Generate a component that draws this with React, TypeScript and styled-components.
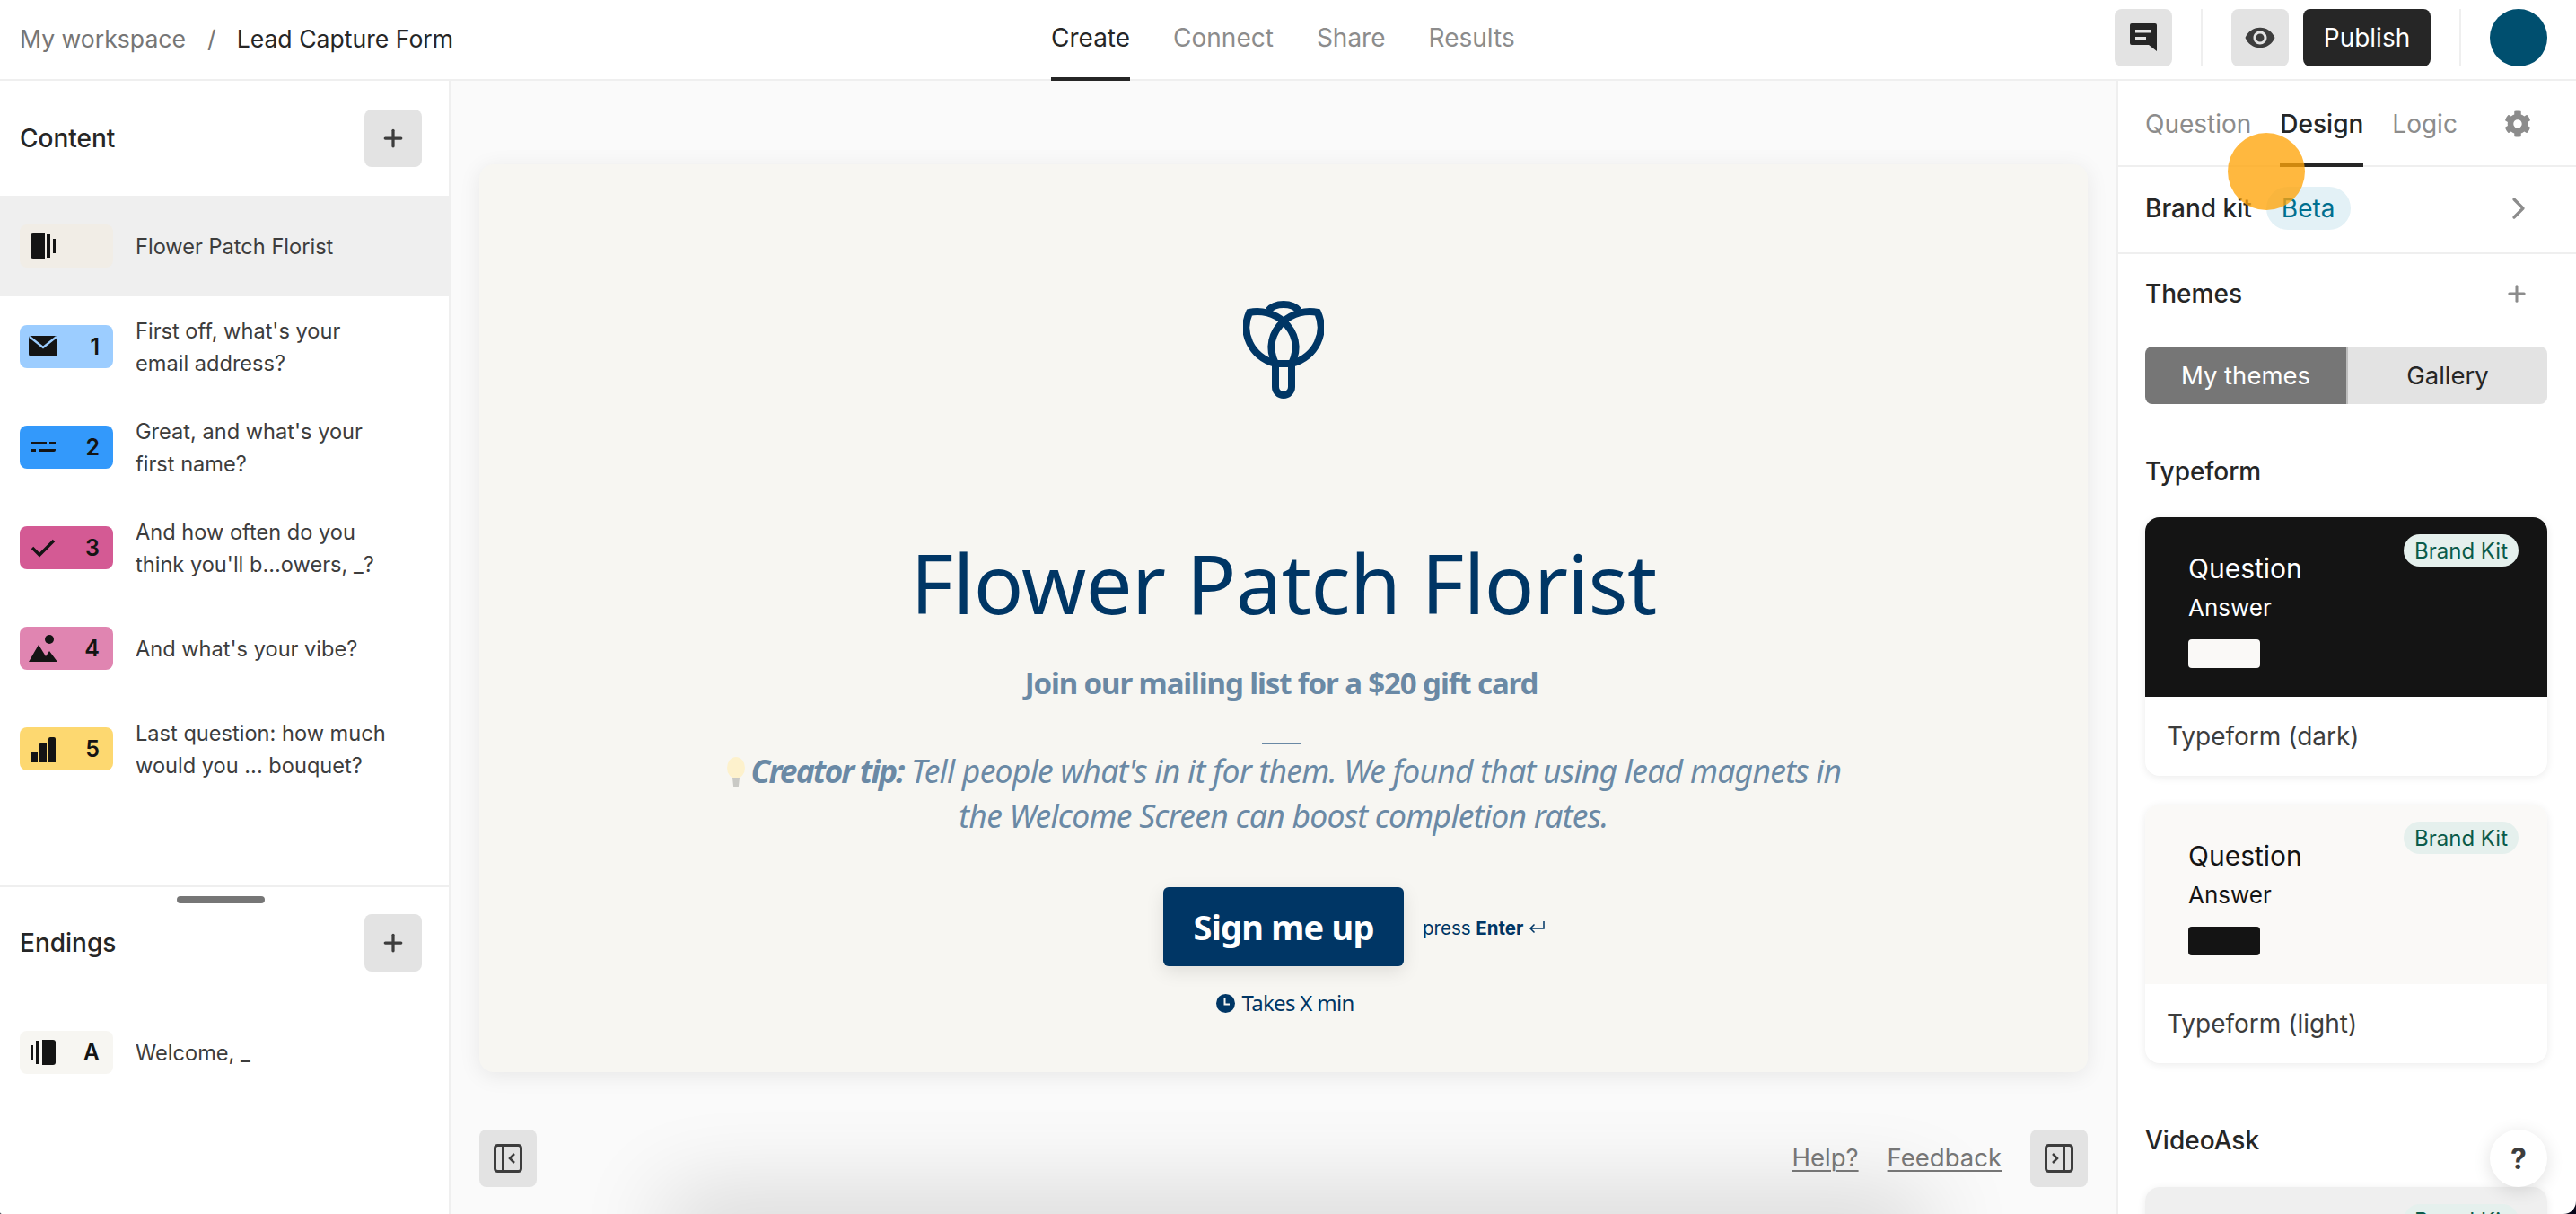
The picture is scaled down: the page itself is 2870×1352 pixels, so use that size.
import React from 'react';
import styled, { createGlobalStyle } from 'styled-components';
import { ChevronRight, Plus } from 'lucide-react';
import { FaCog } from 'react-icons/fa';
import { MdVisibility } from 'react-icons/md';

const GlobalStyle = createGlobalStyle`
  html, body {
    margin: 0;
    padding: 0;
    background: #07071a;
  }
  * {
    box-sizing: border-box;
  }
`;

const Page = styled.div`
  position: relative;
  width: 2870px;
  height: 1352px;
  display: flex;
  flex-direction: column;
  overflow: hidden;
  background: #fff;
  border-radius: 0 0 14px 2px;
  font-family: Inter, 'Liberation Sans', sans-serif;
  color: #262626;
`;

const Header = styled.header`
  flex: none;
  height: 90px;
  display: flex;
  align-items: flex-start;
  border-bottom: 2px solid #efefef;
`;

const Breadcrumb = styled.div`
  width: 1171px;
  height: 88px;
  padding: 0 0 2px 22px;
  display: flex;
  align-items: center;
  font-size: 26.6px;
`;

const Crumb = styled.span<{ $muted?: boolean }>`
  color: ${({ $muted }) => ($muted ? '#767676' : '#262626')};
`;

const Slash = styled.span`
  margin: 0 23px 0 24px;
  color: #767676;
`;

const Nav = styled.nav`
  display: flex;
  gap: 48px;
  height: 90px;
`;

const NavItem = styled.div<{ $active?: boolean }>`
  height: 90px;
  padding-bottom: 2px;
  display: flex;
  align-items: center;
  font-size: 28px;
  color: ${({ $active }) => ($active ? '#262626' : '#8c8c8c')};
  border-bottom: 4px solid ${({ $active }) => ($active ? '#262626' : 'transparent')};
`;

const HeaderActions = styled.div`
  margin-left: auto;
  padding: 10px 32px 0 0;
  display: flex;
  align-items: center;
`;

const IconButton = styled.button`
  width: 64px;
  height: 64px;
  padding: 0;
  border: none;
  border-radius: 8px;
  background: #e3e3e3;
  color: #3d3d3d;
  display: flex;
  align-items: center;
  justify-content: center;
  flex: none;
`;

const PublishButton = styled.button`
  width: 142px;
  height: 64px;
  margin-left: 16px;
  border: none;
  border-radius: 8px;
  background: #262626;
  color: #fff;
  font: 400 28px Inter, sans-serif;
`;

const HeaderDivider = styled.div`
  width: 2px;
  height: 64px;
  margin: 0 32px;
  background: #efefef;
`;

const Avatar = styled.div`
  width: 64px;
  height: 64px;
  border-radius: 50%;
  background: #004f6f;
`;

const Body = styled.div`
  flex: 1;
  min-height: 0;
  display: flex;
`;

const LeftPanel = styled.aside`
  flex: none;
  width: 502px;
  display: flex;
  flex-direction: column;
  border-right: 2px solid #efefef;
`;

const ContentSection = styled.section`
  flex: 1;
  border-bottom: 2px solid #efefef;
`;

const PanelHeader = styled.div`
  height: 128px;
  padding: 0 30px 0 22px;
  display: flex;
  align-items: center;
  justify-content: space-between;
  font-size: 28px;
  font-weight: 500;
`;

const EndingsSection = styled.section`
  flex: none;
  height: 364px;
  display: flex;
  flex-direction: column;
`;

const Handle = styled.div`
  width: 98px;
  height: 8px;
  margin: 10px 0 12px 197px;
  border-radius: 4px;
  background: #767676;
`;

const EndingsHeader = styled(PanelHeader)`
  flex: none;
  height: 64px;
  margin-bottom: 34px;
`;

const Row = styled.div<{ $active?: boolean }>`
  flex: none;
  height: 112px;
  padding-left: 22px;
  display: flex;
  align-items: center;
  gap: 25px;
  background: ${({ $active }) => ($active ? '#efefef' : 'transparent')};
`;

const Badge = styled.div<{ $bg: string }>`
  flex: none;
  width: 104px;
  height: 48px;
  padding: 0 15px 0 10px;
  display: flex;
  align-items: center;
  justify-content: space-between;
  border-radius: 8px;
  background: ${({ $bg }) => $bg};
  font-size: 25px;
  font-weight: 600;
  color: #141414;
`;

const BadgeIcon = styled.svg`
  display: block;
  width: 32px;
  height: 32px;
  fill: #141414;
`;

const RowText = styled.div`
  padding-top: 2px;
  font-size: 23.6px;
  line-height: 36px;
  color: #3d3d3d;
`;

const Main = styled.main`
  position: relative;
  flex: 1;
  min-width: 0;
  padding: 93px 32px 0;
  background: #fafafa;
`;

const WelcomeCard = styled.div`
  height: 1011px;
  padding-top: 152px;
  display: flex;
  flex-direction: column;
  align-items: center;
  border-radius: 16px;
  background: #f7f6f2;
  box-shadow: 0 4px 24px rgba(0, 0, 0, 0.08);
  font-family: 'Noto Sans', sans-serif;
  color: #003665;
`;

const Logo = styled.svg`
  display: block;
  width: 90px;
  height: 110px;
  fill: none;
  stroke: #003665;
  stroke-width: 8;
`;

const Title = styled.h1`
  margin: 145px 0 0;
  font-size: 92px;
  line-height: 118px;
  font-weight: 400;
  letter-spacing: -0.6px;
`;

const Subtitle = styled.div`
  margin: 28px 5px 0 0;
  font-size: 33px;
  line-height: 50px;
  font-weight: 700;
  letter-spacing: -1.1px;
  color: #6a89a5;
`;

const Dash = styled.div`
  width: 44px;
  height: 2px;
  margin: 41px 5px 4px 0;
  background: #6a89a5;
`;

const Tip = styled.div`
  font-size: 35.5px;
  line-height: 50px;
  font-style: italic;
  text-align: center;
  letter-spacing: -0.76px;
  color: #6a89a5;

  strong {
    letter-spacing: -1.9px;
  }
`;

const Bulb = styled.svg`
  width: 22px;
  height: 34px;
  margin-right: 6px;
  vertical-align: -5px;
`;

const CallToAction = styled.div`
  width: 100%;
  margin-top: 55px;
  display: grid;
  grid-template-columns: 1fr auto 1fr;
  align-items: center;
`;

const SubmitButton = styled.button`
  grid-column: 2;
  width: 268px;
  height: 88px;
  border: none;
  border-radius: 6px;
  background: #003665;
  color: #fff;
  font: 700 38px 'Noto Sans', sans-serif;
  letter-spacing: -0.8px;
  box-shadow: 0 6px 20px rgba(0, 0, 0, 0.1);
`;

const PressHint = styled.div`
  margin: 2px 0 0 21px;
  display: flex;
  align-items: center;
  font-family: Inter, sans-serif;
  font-size: 20.5px;
  gap: 6px;

  strong {
    font-weight: 700;
  }
`;

const TimeToComplete = styled.div`
  margin: 26px 0 0 4px;
  display: flex;
  align-items: center;
  gap: 7px;
  font-size: 24px;
  line-height: 30px;
  letter-spacing: -0.7px;
`;

const MainFooter = styled.div`
  margin-top: 64px;
  display: flex;
  align-items: center;
  position: relative;
  z-index: 1;
`;

const FooterLink = styled.span`
  font-size: 27.5px;
  color: #767676;
  text-decoration: underline;
  text-underline-offset: 4px;
  text-decoration-thickness: 2px;
`;

const FooterLinks = styled.div`
  margin: 0 32px 2px auto;
  display: flex;
  gap: 32px;
`;

const BottomGlow = styled.div`
  position: absolute;
  left: 260px;
  right: 230px;
  top: 1262px;
  height: 40px;
  background: #d4d4d4;
  box-shadow: 0 0 100px 20px rgba(0, 0, 0, 0.16);
`;

const RightPanel = styled.aside`
  flex: none;
  width: 512px;
  border-left: 2px solid #efefef;
  overflow: hidden;
`;

const TabsRow = styled.div`
  height: 96px;
  padding: 0 50px 0 30px;
  display: flex;
  align-items: flex-start;
  gap: 32px;
  border-bottom: 2px solid #efefef;
`;

const Tab = styled.div<{ $active?: boolean }>`
  height: 96px;
  padding-top: 28px;
  font-size: 28px;
  line-height: 40px;
  color: ${({ $active }) => ($active ? '#262626' : '#8c8c8c')};
  font-weight: ${({ $active }) => ($active ? 500 : 400)};
  border-bottom: 4px solid ${({ $active }) => ($active ? '#262626' : 'transparent')};
`;

const GearSlot = styled.div`
  margin-left: auto;
  padding-top: 33px;
  color: #8c8c8c;
`;

const BrandKitRow = styled.div`
  height: 97px;
  padding: 0 44px 4px 30px;
  display: flex;
  align-items: center;
  font-size: 28px;
  font-weight: 500;
  border-bottom: 2px solid #efefef;
  color: #8c8c8c;
`;

const BrandKitLabel = styled.span`
  color: #262626;
`;

const BetaPill = styled.span`
  height: 48px;
  margin-left: 16px;
  padding: 0 17px;
  display: flex;
  align-items: center;
  border-radius: 24px;
  background: #e3f1f6;
  color: #006f8f;
  font-weight: 400;
`;

const ThemesHeader = styled.div`
  height: 88px;
  padding: 0 52px 0 30px;
  display: flex;
  align-items: center;
  justify-content: space-between;
  font-size: 28px;
  font-weight: 500;
  color: #8c8c8c;
`;

const SectionLabel = styled.span`
  color: #262626;
`;

const Segmented = styled.div`
  width: 448px;
  height: 64px;
  margin: 15px 0 0 30px;
  display: flex;
  border-radius: 8px;
  overflow: hidden;
`;

const Segment = styled.div<{ $active?: boolean }>`
  flex: ${({ $active }) => ($active ? '0 0 224px' : '1')};
  display: flex;
  align-items: center;
  justify-content: center;
  font-size: 27.5px;
  background: ${({ $active }) => ($active ? '#767676' : '#e3e3e3')};
  color: ${({ $active }) => ($active ? '#fff' : '#262626')};
  border-left: ${({ $active }) => ($active ? 'none' : '2px solid #bdbdbd')};
`;

const GroupTitle = styled.div<{ $top: number }>`
  margin: ${({ $top }) => $top}px 0 0 30px;
  height: 40px;
  display: flex;
  align-items: center;
  font-size: 28px;
  font-weight: 500;
`;

const ThemeCard = styled.div<{ $top: number }>`
  width: 448px;
  margin: ${({ $top }) => $top}px 0 0 30px;
  border-radius: 16px;
  overflow: hidden;
  background: #fff;
  box-shadow: 0 2px 10px rgba(0, 0, 0, 0.08);
`;

const ThemePreview = styled.div<{ $bg: string; $fg: string }>`
  position: relative;
  height: 200px;
  padding: 37px 0 0 48px;
  background: ${({ $bg }) => $bg};
  color: ${({ $fg }) => $fg};
`;

const PreviewQuestion = styled.div`
  font-size: 30px;
  line-height: 40px;
`;

const PreviewAnswer = styled.div`
  margin-top: 4px;
  font-size: 26px;
  line-height: 40px;
`;

const PreviewButton = styled.div<{ $bg: string }>`
  width: 80px;
  height: 32px;
  margin-top: 15px;
  border-radius: 4px;
  background: ${({ $bg }) => $bg};
`;

const KitPill = styled.span`
  position: absolute;
  top: 19px;
  right: 32px;
  width: 128px;
  height: 36px;
  display: flex;
  align-items: center;
  justify-content: center;
  border-radius: 18px;
  background: #e5f0ed;
  color: #0a5b4a;
  font-size: 24px;
`;

const ThemeName = styled.div`
  height: 88px;
  padding-left: 24px;
  display: flex;
  align-items: center;
  font-size: 28px;
  color: #3d3d3d;
`;

const CursorDot = styled.div`
  position: absolute;
  left: 2482px;
  top: 148px;
  width: 86px;
  height: 86px;
  border-radius: 50%;
  background: rgba(255, 164, 9, 0.78);
  pointer-events: none;
`;

const HelpBubble = styled.div`
  position: absolute;
  left: 2774px;
  top: 1258px;
  width: 64px;
  height: 64px;
  display: flex;
  align-items: center;
  justify-content: center;
  border-radius: 50%;
  background: #fff;
  box-shadow: 0 4px 20px rgba(0, 0, 0, 0.12);
  font-size: 32px;
  font-weight: 700;
  color: #3d3d3d;
`;

const StatementIcon = () => (
  <BadgeIcon viewBox="0 0 32 32">
    <path d="M5 4h13v28H5a3 3 0 0 1-3-3V7a3 3 0 0 1 3-3z" transform="translate(0 -2)" />
    <rect x="20" y="3" width="4" height="26" />
    <rect x="27" y="8" width="3" height="16" />
  </BadgeIcon>
);

const EndingIcon = () => (
  <BadgeIcon viewBox="0 0 32 32">
    <rect x="2" y="8" width="3" height="16" />
    <rect x="8" y="3" width="4" height="26" />
    <path d="M15 2h12a3 3 0 0 1 3 3v22a3 3 0 0 1-3 3H15z" />
  </BadgeIcon>
);

const MailIcon = ({ bg }: { bg: string }) => (
  <BadgeIcon viewBox="0 0 32 32">
    <rect x="0" y="4" width="32" height="23" rx="3" />
    <path d="M1 5l15 12L31 5" fill="none" stroke={bg} strokeWidth="2.4" />
  </BadgeIcon>
);

const ShortTextIcon = () => (
  <BadgeIcon viewBox="0 0 32 32">
    <rect x="2" y="10" width="18" height="3" />
    <rect x="23" y="10" width="7" height="3" />
    <rect x="2" y="18" width="6" height="3" />
    <path d="M12 18h18v1a2 2 0 0 1-2 2H12z" />
  </BadgeIcon>
);

const CheckIcon = () => (
  <BadgeIcon viewBox="0 0 32 32">
    <path d="M4 16l8 8L28 8" fill="none" stroke="#141414" strokeWidth="3.4" />
  </BadgeIcon>
);

const PictureIcon = () => (
  <BadgeIcon viewBox="0 0 32 32">
    <circle cx="23" cy="6" r="5" />
    <path d="M0 31L11 12l8 13 4-6 9 12z" />
  </BadgeIcon>
);

const BarsIcon = () => (
  <BadgeIcon viewBox="0 0 32 32">
    <path d="M2 21a2 2 0 0 1 2-2h6v12H2z" />
    <path d="M12 11a2 2 0 0 1 2-2h6v22h-8z" />
    <path d="M22 5a2 2 0 0 1 2-2h4a2 2 0 0 1 2 2v26h-8z" />
  </BadgeIcon>
);

const ChatIcon = () => (
  <svg width="30" height="32" viewBox="0 0 30 32">
    <path d="M2 0h26a2 2 0 0 1 2 2v29l-9-7H2a2 2 0 0 1-2-2V2a2 2 0 0 1 2-2z" fill="#262626" />
    <rect x="6" y="7" width="18" height="3.5" fill="#e3e3e3" />
    <rect x="6" y="15" width="12" height="3.5" fill="#e3e3e3" />
  </svg>
);

const PanelToggle = ({ flip }: { flip?: boolean }) => (
  <svg width="32" height="32" viewBox="0 0 32 32" fill="none" stroke="#3d3d3d" strokeWidth="3">
    <g transform={flip ? 'matrix(-1 0 0 1 32 0)' : undefined}>
      <rect x="1.5" y="1.5" width="29" height="29" rx="3" />
      <path d="M10.5 2v28" />
      <path d="M23 11l-5 5 5 5" strokeWidth="2.5" />
    </g>
  </svg>
);

const ClockIcon = () => (
  <svg width="21" height="21" viewBox="0 0 21 21">
    <circle cx="10.5" cy="10.5" r="10.5" fill="#003665" />
    <path d="M9.5 5v6.5H15" fill="none" stroke="#f7f6f2" strokeWidth="2" />
  </svg>
);

const ReturnIcon = () => (
  <svg width="18" height="14" viewBox="0 0 18 14" fill="none" stroke="#003665" strokeWidth="1.5">
    <path d="M17 0v8H2M6.5 3.5L2 8l4.5 4.5" />
  </svg>
);

const questions = [
  { id: 1, bg: '#9ccdff', text: ["First off, what's your", 'email address?'] },
  { id: 2, bg: '#3399fb', text: ["Great, and what's your", 'first name?'] },
  { id: 3, bg: '#d45a94', text: ['And how often do you', "think you'll b...owers, _?"] },
  { id: 4, bg: '#e085b1', text: ["And what's your vibe?"] },
  { id: 5, bg: '#fdd870', text: ['Last question: how much', 'would you ... bouquet?'] },
];

const questionIcon = (id: number, bg: string) => {
  switch (id) {
    case 1:
      return <MailIcon bg={bg} />;
    case 2:
      return <ShortTextIcon />;
    case 3:
      return <CheckIcon />;
    case 4:
      return <PictureIcon />;
    default:
      return <BarsIcon />;
  }
};

export default function App() {
  return (
    <Page>
      <GlobalStyle />
      <Header>
        <Breadcrumb>
          <Crumb $muted>My workspace</Crumb>
          <Slash>/</Slash>
          <Crumb>Lead Capture Form</Crumb>
        </Breadcrumb>
        <Nav>
          <NavItem $active>Create</NavItem>
          <NavItem>Connect</NavItem>
          <NavItem>Share</NavItem>
          <NavItem>Results</NavItem>
        </Nav>
        <HeaderActions>
          <IconButton>
            <ChatIcon />
          </IconButton>
          <HeaderDivider />
          <IconButton>
            <MdVisibility size={36} />
          </IconButton>
          <PublishButton>Publish</PublishButton>
          <HeaderDivider />
          <Avatar />
        </HeaderActions>
      </Header>
      <Body>
        <LeftPanel>
          <ContentSection>
            <PanelHeader>
              Content
              <IconButton>
                <Plus size={30} strokeWidth={2.6} />
              </IconButton>
            </PanelHeader>
            <Row $active>
              <Badge $bg="#f1ede6">
                <StatementIcon />
              </Badge>
              <RowText>Flower Patch Florist</RowText>
            </Row>
            {questions.map((q) => (
              <Row key={q.id}>
                <Badge $bg={q.bg}>
                  {questionIcon(q.id, q.bg)}
                  {q.id}
                </Badge>
                <RowText>
                  {q.text.map((line) => (
                    <div key={line}>{line}</div>
                  ))}
                </RowText>
              </Row>
            ))}
          </ContentSection>
          <EndingsSection>
            <Handle />
            <EndingsHeader>
              Endings
              <IconButton>
                <Plus size={30} strokeWidth={2.6} />
              </IconButton>
            </EndingsHeader>
            <Row>
              <Badge $bg="#f7f6f2">
                <EndingIcon />A
              </Badge>
              <RowText>Welcome, _</RowText>
            </Row>
          </EndingsSection>
        </LeftPanel>
        <Main>
          <WelcomeCard>
            <Logo viewBox="0 0 90 110">
              <path d="M36 70v26a9 9 0 0 0 18 0V70" />
              <path d="M36 70h18" />
              <path d="M45 23C35 14 20 10 7 13C-3 35 8 62 36 70" />
              <path d="M45 23C55 14 70 10 83 13C93 35 82 62 54 70" />
              <path d="M28 11C32 6 38 4 45 4s13 2 17 7" />
              <path d="M36 70C27 52 32 35 45 23" />
              <path d="M54 70C63 52 58 35 45 23" />
            </Logo>
            <Title>Flower Patch Florist</Title>
            <Subtitle>Join our mailing list for a $20 gift card</Subtitle>
            <Dash />
            <Tip>
              <Bulb viewBox="0 0 22 34">
                <ellipse cx="11" cy="12" rx="10" ry="12" fill="#fdf1cc" />
                <path d="M7 23h8l-1 9a3 3 0 0 1-6 0z" fill="#c9c9c5" />
              </Bulb>
              <strong>Creator tip:</strong> Tell people what's in it for them. We found that using lead magnets in
              <br />
              the Welcome Screen can boost completion rates.
            </Tip>
            <CallToAction>
              <SubmitButton>Sign me up</SubmitButton>
              <PressHint>
                <span>
                  press <strong>Enter</strong>
                </span>
                <ReturnIcon />
              </PressHint>
            </CallToAction>
            <TimeToComplete>
              <ClockIcon />
              Takes X min
            </TimeToComplete>
          </WelcomeCard>
          <MainFooter>
            <IconButton>
              <PanelToggle />
            </IconButton>
            <FooterLinks>
              <FooterLink>Help?</FooterLink>
              <FooterLink>Feedback</FooterLink>
            </FooterLinks>
            <IconButton>
              <PanelToggle flip />
            </IconButton>
          </MainFooter>
          <BottomGlow />
        </Main>
        <RightPanel>
          <TabsRow>
            <Tab>Question</Tab>
            <Tab $active>Design</Tab>
            <Tab>Logic</Tab>
            <GearSlot>
              <FaCog size={30} />
            </GearSlot>
          </TabsRow>
          <BrandKitRow>
            <BrandKitLabel>Brand kit</BrandKitLabel>
            <BetaPill>Beta</BetaPill>
            <ChevronRight size={40} strokeWidth={2} style={{ marginLeft: 'auto' }} />
          </BrandKitRow>
          <ThemesHeader>
            <SectionLabel>Themes</SectionLabel>
            <Plus size={28} strokeWidth={2.6} />
          </ThemesHeader>
          <Segmented>
            <Segment $active>My themes</Segment>
            <Segment>Gallery</Segment>
          </Segmented>
          <GroupTitle $top={55}>Typeform</GroupTitle>
          <ThemeCard $top={31}>
            <ThemePreview $bg="#141414" $fg="#fff">
              <PreviewQuestion>Question</PreviewQuestion>
              <PreviewAnswer>Answer</PreviewAnswer>
              <PreviewButton $bg="#faf9f7" />
              <KitPill>Brand Kit</KitPill>
            </ThemePreview>
            <ThemeName>Typeform (dark)</ThemeName>
          </ThemeCard>
          <ThemeCard $top={32}>
            <ThemePreview $bg="#faf9f7" $fg="#141414">
              <PreviewQuestion>Question</PreviewQuestion>
              <PreviewAnswer>Answer</PreviewAnswer>
              <PreviewButton $bg="#141414" />
              <KitPill>Brand Kit</KitPill>
            </ThemePreview>
            <ThemeName>Typeform (light)</ThemeName>
          </ThemeCard>
          <GroupTitle $top={66}>VideoAsk</GroupTitle>
          <ThemeCard $top={32}>
            <ThemePreview $bg="#efefef" $fg="#141414">
              <KitPill>Brand Kit</KitPill>
            </ThemePreview>
          </ThemeCard>
        </RightPanel>
      </Body>
      <CursorDot />
      <HelpBubble>?</HelpBubble>
    </Page>
  );
}
